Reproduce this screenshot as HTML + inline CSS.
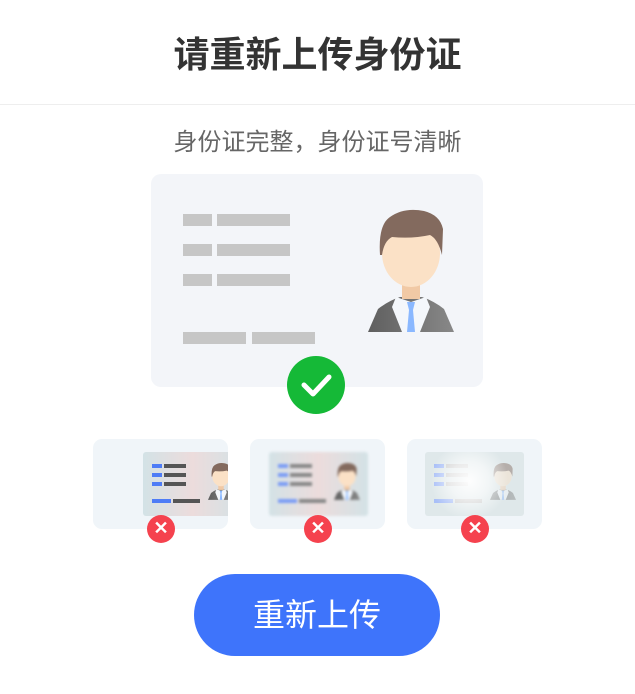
<!DOCTYPE html><html><head><meta charset="utf-8"><style>
*{margin:0;padding:0;box-sizing:border-box}
body{width:635px;height:694px;background:#fff;font-family:"Liberation Sans","Noto Sans CJK SC",sans-serif;position:relative;overflow:hidden}
.a{position:absolute}
.bar{position:absolute;background:#c6c6c6;height:12px}
.sc{position:absolute;top:439px;width:135px;height:90px;background:#f0f5f9;border-radius:9px;overflow:hidden}
.in{position:absolute;top:13px;width:99px;height:64px;border-radius:3px;overflow:hidden;background:linear-gradient(90deg,#d3e2e6,#ecdcdc 50%,#d3e2e6)}
.x{position:absolute;top:515px;width:28px;height:28px;border-radius:50%;background:#f5424e;color:#fff;text-align:center;line-height:27px;font-size:18px;font-weight:bold}
</style></head><body>
<svg width="0" height="0" style="position:absolute"><defs>
<linearGradient id="g" x1="0" x2="1"><stop offset="0" stop-color="#5f5f5f"/><stop offset="1" stop-color="#888"/></linearGradient>
<symbol id="p" viewBox="0 0 86 125">
<path d="M0 125 L10 102 Q20 94 32 90 L54 90 Q66 94 76 102 L86 125Z" fill="url(#g)"/>
<rect x="34" y="70" width="18" height="22" fill="#f1c9a5"/>
<path d="M28 90 L43 95 L58 90 L62 100 L52 125 L34 125 L24 100Z" fill="#f4f7fb"/>
<path d="M39 95 L47 95 L45 103 L47 125 L39 125 L41 103Z" fill="#8ab8ff"/>
<ellipse cx="43" cy="46" rx="29" ry="34" fill="#fbe1c6"/>
<path d="M12 48 Q10 18 22 10 Q36 0 56 4 Q72 8 75 22 L74 48 Q70 32 62 28 Q44 32 24 30 Q16 34 14 48Z" fill="#836a5e"/>
</symbol></defs></svg>
<div class="a" style="top:26px;width:635px;text-align:center;font-size:36px;font-weight:bold;color:#333">请重新上传身份证</div>
<div class="a" style="top:104px;width:635px;height:1px;background:#eee"></div>
<div class="a" style="top:122px;width:635px;text-align:center;font-size:24px;color:#666">身份证完整，身份证号清晰</div>
<div class="a" style="left:151px;top:174px;width:332px;height:213px;background:#f3f5f9;border-radius:10px"></div>
<div class="bar" style="left:183px;top:214px;width:29px"></div><div class="bar" style="left:217px;top:214px;width:73px"></div>
<div class="bar" style="left:183px;top:244px;width:29px"></div><div class="bar" style="left:217px;top:244px;width:73px"></div>
<div class="bar" style="left:183px;top:274px;width:29px"></div><div class="bar" style="left:217px;top:274px;width:73px"></div>
<div class="bar" style="left:183px;top:332px;width:63px"></div><div class="bar" style="left:252px;top:332px;width:63px"></div>
<svg class="a" style="left:368px;top:207px" width="86" height="125"><use href="#p"/></svg>
<svg class="a" style="left:287px;top:356px" width="58" height="58"><circle cx="29" cy="29" r="29" fill="#15b937"/><path d="M17 29 L26 38 L42 21" stroke="#fff" stroke-width="5" fill="none" stroke-linecap="round" stroke-linejoin="round"/></svg>

<div class="sc" style="left:93px"><div class="in" style="left:50px">
<div class="a" style="left:9px;top:12px;width:10px;height:4px;background:#4e7cf6"></div><div class="a" style="left:21px;top:12px;width:22px;height:4px;background:#555"></div>
<div class="a" style="left:9px;top:21px;width:10px;height:4px;background:#4e7cf6"></div><div class="a" style="left:21px;top:21px;width:22px;height:4px;background:#555"></div>
<div class="a" style="left:9px;top:30px;width:10px;height:4px;background:#4e7cf6"></div><div class="a" style="left:21px;top:30px;width:22px;height:4px;background:#555"></div>
<div class="a" style="left:9px;top:47px;width:19px;height:4px;background:#4e7cf6"></div><div class="a" style="left:30px;top:47px;width:27px;height:4px;background:#555"></div>
<svg class="a" style="left:65px;top:10px" width="26" height="38"><use href="#p"/></svg></div></div>

<div class="sc" style="left:250px"><div class="in" style="left:19px;filter:blur(1.3px)">
<div class="a" style="left:9px;top:12px;width:10px;height:4px;background:#7b9cf5"></div><div class="a" style="left:21px;top:12px;width:22px;height:4px;background:#888"></div>
<div class="a" style="left:9px;top:21px;width:10px;height:4px;background:#7b9cf5"></div><div class="a" style="left:21px;top:21px;width:22px;height:4px;background:#888"></div>
<div class="a" style="left:9px;top:30px;width:10px;height:4px;background:#7b9cf5"></div><div class="a" style="left:21px;top:30px;width:22px;height:4px;background:#888"></div>
<div class="a" style="left:9px;top:47px;width:19px;height:4px;background:#7b9cf5"></div><div class="a" style="left:30px;top:47px;width:27px;height:4px;background:#888"></div>
<svg class="a" style="left:65px;top:10px" width="26" height="38"><use href="#p"/></svg></div></div>

<div class="sc" style="left:407px"><div class="in" style="left:18px;background:#dfe8ea">
<div class="a" style="left:9px;top:12px;width:10px;height:4px;background:#a9bff7"></div><div class="a" style="left:21px;top:12px;width:22px;height:4px;background:#ccc"></div>
<div class="a" style="left:9px;top:21px;width:10px;height:4px;background:#a9bff7"></div><div class="a" style="left:21px;top:21px;width:22px;height:4px;background:#ccc"></div>
<div class="a" style="left:9px;top:30px;width:10px;height:4px;background:#a9bff7"></div><div class="a" style="left:21px;top:30px;width:22px;height:4px;background:#ccc"></div>
<div class="a" style="left:9px;top:47px;width:19px;height:4px;background:#a9bff7"></div><div class="a" style="left:30px;top:47px;width:27px;height:4px;background:#ccc"></div>
<svg class="a" style="left:65px;top:10px;opacity:.45" width="26" height="38"><use href="#p"/></svg>
<div class="a" style="left:0;top:0;width:99px;height:64px;background:radial-gradient(circle at 45% 45%,rgba(255,255,255,.95),rgba(255,255,255,.6) 30%,rgba(255,255,255,0) 60%)"></div></div></div>

<div class="x" style="left:147px">✕</div><div class="x" style="left:304px">✕</div><div class="x" style="left:461px">✕</div>
<div class="a" style="left:194px;top:574px;width:246px;height:82px;border-radius:41px;background:#3e74fb;color:#fff;font-size:32px;text-align:center;line-height:82px">重新上传</div>
</body></html>
